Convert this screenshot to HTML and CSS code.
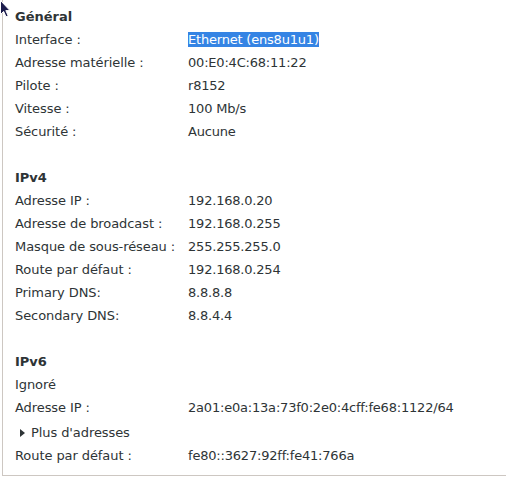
FILE: index.html
```html
<!DOCTYPE html>
<html lang="fr">
<head>
<meta charset="utf-8">
<title>Détails</title>
<link rel="stylesheet" href="styles.css">
</head>
<body>
<div class="panel">
  <section class="section">
    <div class="head">Général</div>
    <div class="row"><span class="label">Interface :</span><span class="value"><span class="sel">Ethernet (ens8u1u1)</span></span></div>
    <div class="row"><span class="label">Adresse matérielle :</span><span class="value">00:E0:4C:68:11:22</span></div>
    <div class="row"><span class="label">Pilote :</span><span class="value">r8152</span></div>
    <div class="row"><span class="label">Vitesse :</span><span class="value">100 Mb/s</span></div>
    <div class="row"><span class="label">Sécurité :</span><span class="value">Aucune</span></div>
  </section>
  <section class="section">
    <div class="head">IPv4</div>
    <div class="row"><span class="label">Adresse IP :</span><span class="value">192.168.0.20</span></div>
    <div class="row"><span class="label">Adresse de broadcast :</span><span class="value">192.168.0.255</span></div>
    <div class="row"><span class="label">Masque de sous-réseau :</span><span class="value">255.255.255.0</span></div>
    <div class="row"><span class="label">Route par défaut :</span><span class="value">192.168.0.254</span></div>
    <div class="row"><span class="label">Primary DNS:</span><span class="value">8.8.8.8</span></div>
    <div class="row"><span class="label">Secondary DNS:</span><span class="value">8.8.4.4</span></div>
  </section>
  <section class="section">
    <div class="head">IPv6</div>
    <div class="row"><span class="label">Ignoré</span></div>
    <div class="row"><span class="label">Adresse IP :</span><span class="value">2a01:e0a:13a:73f0:2e0:4cff:fe68:1122/64</span></div>
    <div class="row expander"><span class="arrow"></span><span class="label">Plus d'adresses</span></div>
    <div class="row"><span class="label">Route par défaut :</span><span class="value">fe80::3627:92ff:fe41:766a</span></div>
  </section>
</div>
<svg class="cursor" width="12" height="18" viewBox="0 0 12 18">
  <path d="M0.5 0.5 L0.5 14.5 L3.6 11.4 L6 16.8 L8.2 15.8 L5.8 10.6 L10 10.6 Z" fill="#1c1c4c" stroke="#ffffff" stroke-width="1"/>
</svg>
</body>
</html>
```

FILE: styles.css
```css
html, body {
  margin: 0;
  padding: 0;
  background: #ffffff;
}

body {
  position: relative;
  width: 506px;
  height: 477px;
  overflow: hidden;
  font-family: "DejaVu Sans", sans-serif;
  font-size: 13px;
  color: #2e3436;
}

.panel {
  margin-left: 2px;
  width: 491px;
  height: 470px;
  border-left: 1px solid #cdc7c2;
  border-bottom: 1px solid #cdc7c2;
  padding: 5px 0 0 12px;
  box-sizing: content-box;
  display: flex;
  flex-direction: column;
  gap: 23px;
  overflow: hidden;
}

.section {
  display: flex;
  flex-direction: column;
}

.head {
  font-weight: bold;
  line-height: 23px;
  height: 23px;
}

.row {
  display: flex;
  align-items: center;
  height: 23px;
  line-height: 23px;
  white-space: nowrap;
}

.label {
  width: 173px;
  flex: none;
  letter-spacing: -0.08px;
}

.value {
  letter-spacing: -0.2px;
}

.sel {
  background: #3584e4;
  color: #ffffff;
}

.expander {
  margin-top: 2px;
  padding-left: 5px;
  gap: 6px;
}

.arrow {
  width: 0;
  height: 0;
  border-left: 5px solid #2e3436;
  border-top: 4px solid transparent;
  border-bottom: 4px solid transparent;
}

.cursor {
  position: absolute;
  left: 0;
  top: 0;
}
```
